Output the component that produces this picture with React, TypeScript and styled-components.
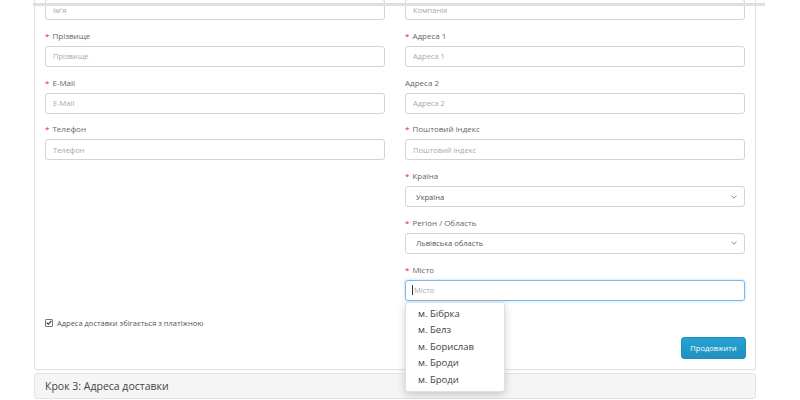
import React from "react";
import styled, { createGlobalStyle } from "styled-components";

const GlobalStyle = createGlobalStyle`
  html, body {
    margin: 0;
    padding: 0;
    background: #fff;
    overflow: hidden;
  }
  body {
    font-family: "Open Sans", "Liberation Sans", sans-serif;
    color: #666;
  }
`;

const Page = styled.div`
  position: relative;
  width: 800px;
  height: 400px;
  overflow: hidden;
`;

const HeaderEdge = styled.div`
  position: absolute;
  top: 3px;
  left: 33px;
  width: 732px;
  height: 3px;
  background: #d9e0e6;
  z-index: 5;
`;

const Wrap = styled.div`
  width: 722px;
  margin-left: 34px;
`;

const Panel = styled.div`
  margin-top: -33px;
  border: 1px solid #e3e3e3;
  border-radius: 3px;
  background: #fff;
  box-shadow: 0 1px 1px rgba(0, 0, 0, 0.04);
  padding: 15px 10px 10px;
`;

const Columns = styled.div`
  display: grid;
  grid-template-columns: 340px 340px;
  column-gap: 20px;
  align-items: start;
`;

const Column = styled.div`
  display: flex;
  flex-direction: column;
`;

const Field = styled.div`
  position: relative;
  display: flex;
  flex-direction: column;
  margin-bottom: 9.8px;
`;

const Label = styled.label`
  font-size: 8px;
  line-height: 12px;
  height: 12px;
  margin-bottom: 4px;
  color: #666;
`;

const Star = styled.span`
  color: #e0262b;
  margin-right: 3px;
`;

const Input = styled.input`
  box-sizing: border-box;
  width: 100%;
  height: 21px;
  border: 1px solid #d4d4d4;
  border-radius: 3px;
  padding: 0 7px;
  font-family: inherit;
  font-size: 7.5px;
  color: #555;
  outline: none;
  background: #fff;
  &::placeholder {
    color: #a9a9a9;
  }
`;

const SelectBox = styled.div`
  box-sizing: border-box;
  height: 21px;
  border: 1px solid #d4d4d4;
  border-radius: 3px;
  padding: 0 7px 0 10px;
  display: flex;
  align-items: center;
  justify-content: space-between;
  font-size: 7.5px;
  color: #555;
`;

const FocusBox = styled.div`
  box-sizing: border-box;
  height: 21px;
  border: 1px solid #7db8e6;
  border-radius: 3px;
  box-shadow: 0 0 3px rgba(102, 175, 233, 0.55);
  padding: 0 6px;
  display: flex;
  align-items: center;
  font-size: 7.5px;
  color: #a9a9a9;
`;

const Caret = styled.span`
  display: inline-block;
  width: 1px;
  height: 10px;
  background: #333;
  margin-right: 1px;
`;

const Menu = styled.ul`
  position: absolute;
  top: 38px;
  left: 0;
  width: 100px;
  margin: 0;
  padding: 3px 0;
  list-style: none;
  box-sizing: border-box;
  background: #fff;
  border: 1px solid rgba(0, 0, 0, 0.12);
  border-radius: 3px;
  box-shadow: 0 3px 8px rgba(0, 0, 0, 0.18);
  z-index: 10;
`;

const MenuItem = styled.li`
  height: 16.5px;
  line-height: 16.5px;
  padding-left: 12px;
  font-size: 9.5px;
  color: #444;
`;

const CheckRow = styled.div`
  margin-top: 6.4px;
  display: flex;
  align-items: center;
  height: 12px;
  font-size: 7.5px;
  color: #555;
`;

const CheckBox = styled.span`
  box-sizing: border-box;
  width: 8px;
  height: 8px;
  border: 1px solid #777;
  border-radius: 1px;
  margin-right: 4px;
  display: flex;
  align-items: center;
  justify-content: center;
`;

const Actions = styled.div`
  margin-top: 8px;
  display: flex;
  justify-content: flex-end;
  padding-right: 0;
`;

const Button = styled.button`
  box-sizing: border-box;
  width: 65px;
  height: 22px;
  margin-right: -1px;
  border: 1px solid #1f8fbb;
  border-radius: 3px;
  background: linear-gradient(#26a3d3, #1e91bf);
  color: #fff;
  font-family: inherit;
  font-size: 7.5px;
  padding: 0;
`;

const Heading = styled.div`
  box-sizing: border-box;
  margin-top: 3px;
  height: 26px;
  border: 1px solid #e3e3e3;
  border-radius: 3px;
  background: #f5f5f5;
  padding-left: 10px;
  display: flex;
  align-items: center;
  font-size: 10.5px;
  color: #444;
`;

const Chevron = () => (
  <svg width="6" height="4" viewBox="0 0 6 4">
    <path d="M0.5 0.6 L3 3.2 L5.5 0.6" fill="none" stroke="#888" strokeWidth="1" />
  </svg>
);

type FieldDef = { label: string; required?: boolean };

const leftFields: FieldDef[] = [
  { label: "Ім'я", required: true },
  { label: "Прізвище", required: true },
  { label: "E-Mail", required: true },
  { label: "Телефон", required: true },
];

const rightFields: FieldDef[] = [
  { label: "Компанія" },
  { label: "Адреса 1", required: true },
  { label: "Адреса 2" },
  { label: "Поштовий індекс", required: true },
];

const cities = ["м. Бібрка", "м. Белз", "м. Борислав", "м. Броди", "м. Броди"];

const FieldLabel = ({ label, required }: FieldDef) => (
  <Label>
    {required && <Star>*</Star>}
    {label}
  </Label>
);

const TextField = ({ label, required }: FieldDef) => (
  <Field>
    <FieldLabel label={label} required={required} />
    <Input placeholder={label} readOnly />
  </Field>
);

export default function App() {
  return (
    <Page>
      <GlobalStyle />
      <HeaderEdge />
      <Wrap>
        <Panel>
          <Columns>
            <Column>
              {leftFields.map((f) => (
                <TextField key={f.label} {...f} />
              ))}
            </Column>
            <Column>
              {rightFields.map((f) => (
                <TextField key={f.label} {...f} />
              ))}
              <Field>
                <FieldLabel label="Країна" required />
                <SelectBox>
                  <span>Україна</span>
                  <Chevron />
                </SelectBox>
              </Field>
              <Field>
                <FieldLabel label="Регіон / Область" required />
                <SelectBox>
                  <span>Львівська область</span>
                  <Chevron />
                </SelectBox>
              </Field>
              <Field>
                <FieldLabel label="Місто" required />
                <FocusBox>
                  <Caret />
                  Місто
                </FocusBox>
                <Menu>
                  {cities.map((c, i) => (
                    <MenuItem key={`${i}-${c}`}>{c}</MenuItem>
                  ))}
                </Menu>
              </Field>
            </Column>
          </Columns>
          <CheckRow>
            <CheckBox>
              <svg width="6" height="5" viewBox="0 0 6 5">
                <path d="M0.6 2.6 L2.3 4.2 L5.4 0.8" fill="none" stroke="#333" strokeWidth="1.1" />
              </svg>
            </CheckBox>
            Адреса доставки збігається з платіжною
          </CheckRow>
          <Actions>
            <Button>Продовжити</Button>
          </Actions>
        </Panel>
        <Heading>Крок 3: Адреса доставки</Heading>
      </Wrap>
    </Page>
  );
}
